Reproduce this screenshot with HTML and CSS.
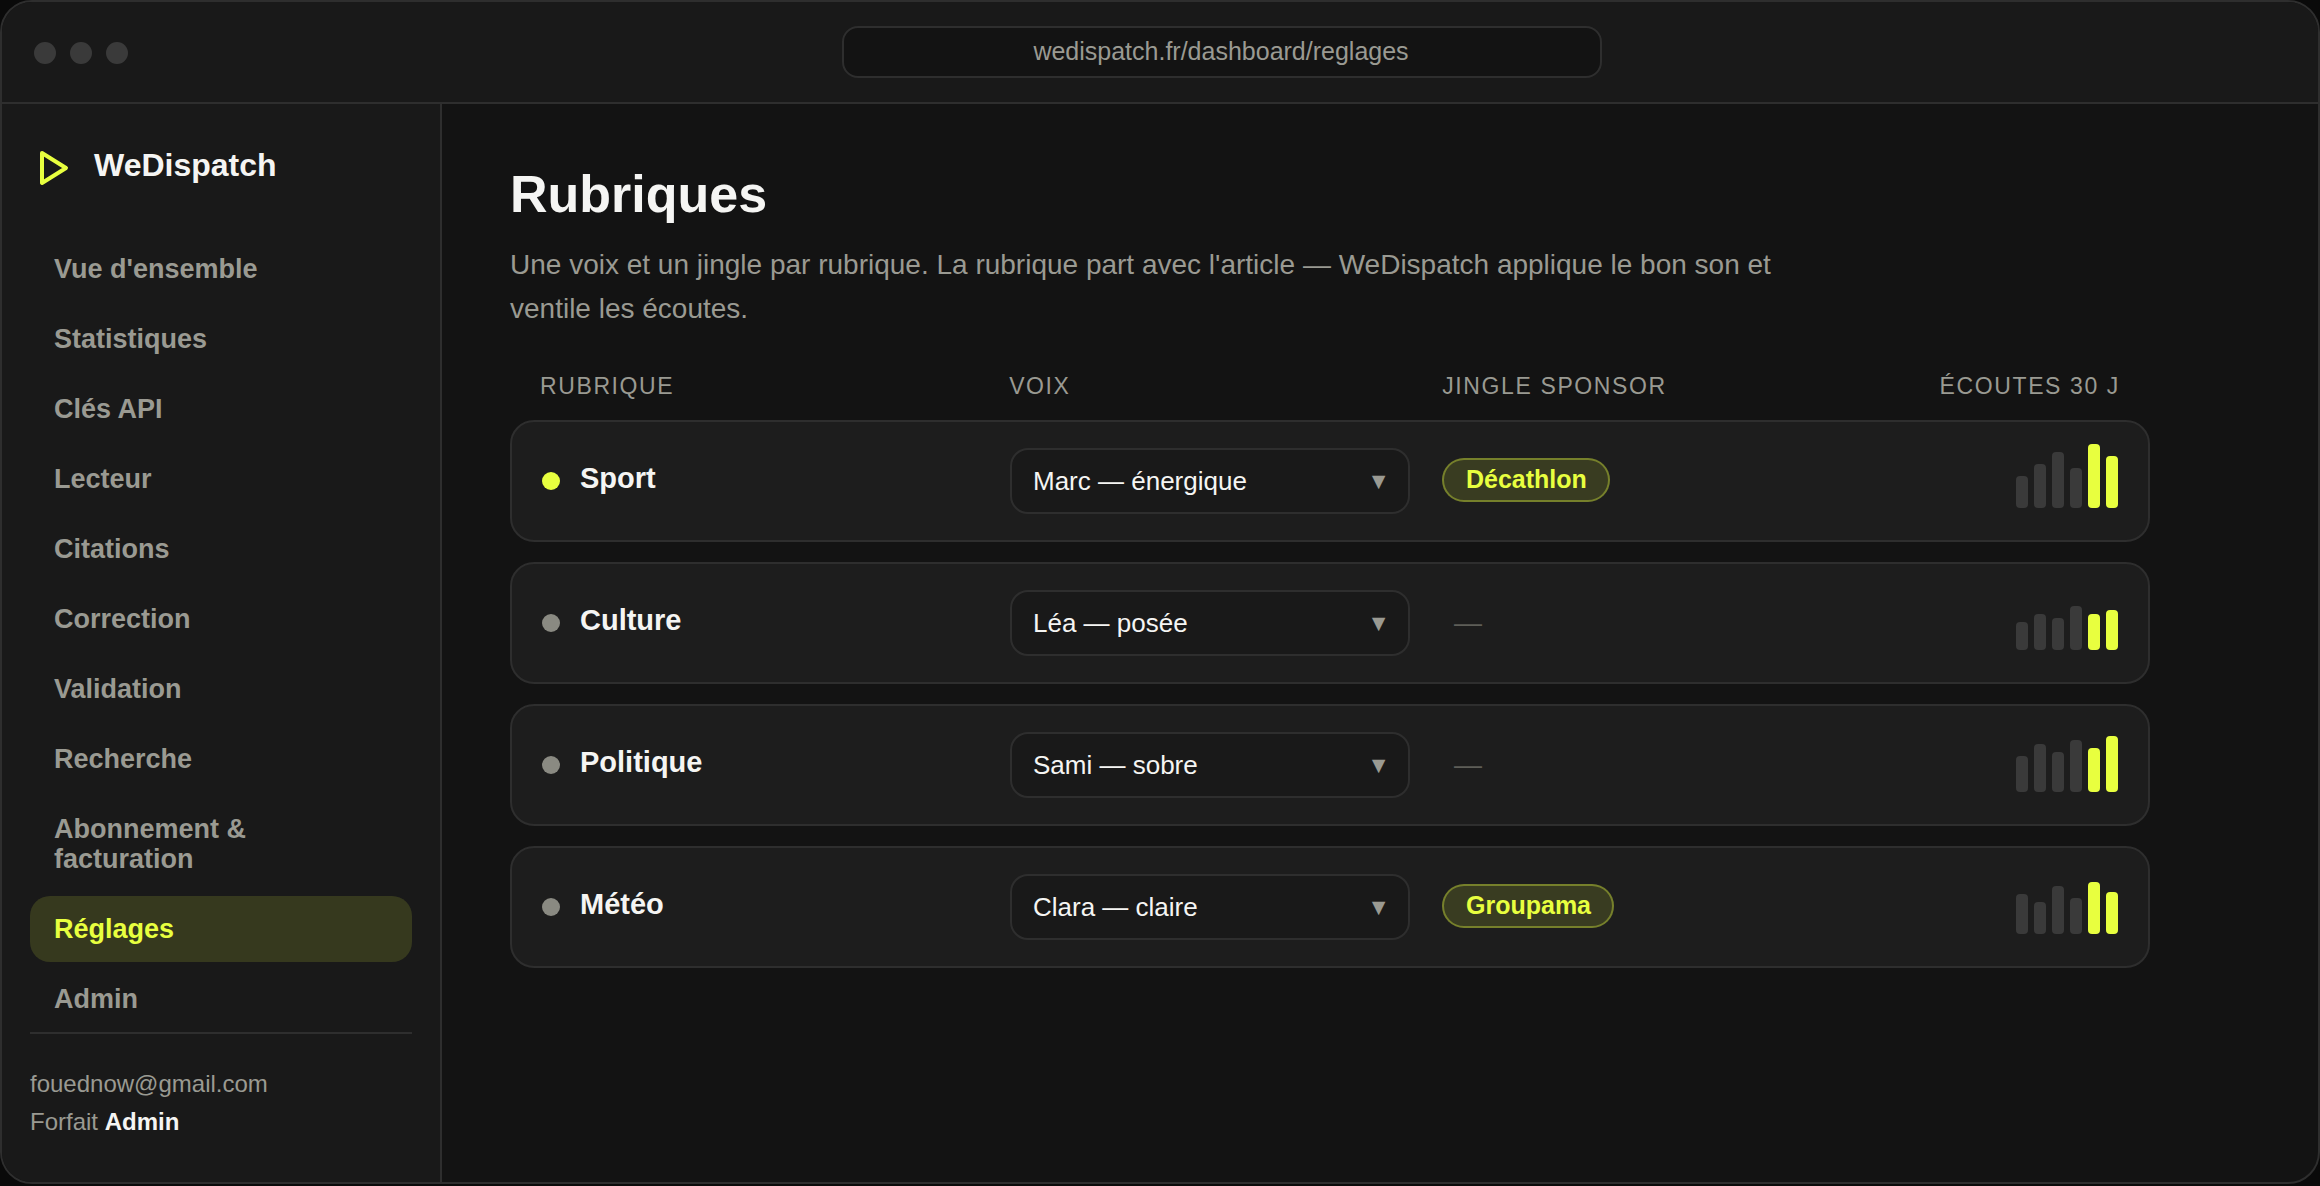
FILE: index.html
```
<!DOCTYPE html>
<html lang="fr">
<head>
    <meta charset="UTF-8">
    <meta name="viewport" content="width=device-width, initial-scale=1.0">
    <title>WeDispatch - Réglages</title>
    <link rel="stylesheet" href="styles.css">
</head>
<body>
    <div class="window">
        <div class="titlebar">
            <div class="dots"><i></i><i></i><i></i></div>
            <div class="url-zone">
                <div class="url">wedispatch.fr/dashboard/reglages</div>
            </div>
        </div>

        <div class="layout">
            <aside class="sidebar">
                <div class="brand">
                    <svg class="brand-icon" viewBox="0 0 48 48" fill="none">
                        <path d="M12 9 L36 24 L12 39 Z" stroke="#e8ff3f" stroke-width="4" stroke-linejoin="round"/>
                    </svg>
                    <span>WeDispatch</span>
                </div>

                <nav class="nav">
                    <a class="nav-item">Vue d'ensemble</a>
                    <a class="nav-item">Statistiques</a>
                    <a class="nav-item">Clés API</a>
                    <a class="nav-item">Lecteur</a>
                    <a class="nav-item">Citations</a>
                    <a class="nav-item">Correction</a>
                    <a class="nav-item">Validation</a>
                    <a class="nav-item">Recherche</a>
                    <a class="nav-item">Abonnement &amp; facturation</a>
                    <a class="nav-item active">Réglages</a>
                    <a class="nav-item">Admin</a>
                </nav>

                <div class="account">
                    <div>fouednow@gmail.com</div>
                    <div>Forfait <b>Admin</b></div>
                </div>
            </aside>

            <main class="main">
                <h1>Rubriques</h1>
                <p class="intro">Une voix et un jingle par rubrique. La rubrique part avec l'article — WeDispatch applique le bon son et ventile les écoutes.</p>

                <div class="table-head">
                    <span>Rubrique</span>
                    <span>Voix</span>
                    <span>Jingle sponsor</span>
                    <span class="right">Écoutes 30 j</span>
                </div>

                <div class="rows">
                    <div class="row">
                        <div class="name"><i class="dot on"></i><span>Sport</span></div>
                        <div class="select"><span>Marc — énergique</span><span class="caret">▼</span></div>
                        <div class="sponsor"><span class="pill">Décathlon</span></div>
                        <div class="spark">
                            <i style="height: 32px"></i><i style="height: 44px"></i><i style="height: 56px"></i><i style="height: 40px"></i><i class="hot" style="height: 64px"></i><i class="hot" style="height: 52px"></i>
                        </div>
                    </div>

                    <div class="row">
                        <div class="name"><i class="dot"></i><span>Culture</span></div>
                        <div class="select"><span>Léa — posée</span><span class="caret">▼</span></div>
                        <div class="sponsor"><span class="none">—</span></div>
                        <div class="spark">
                            <i style="height: 28px"></i><i style="height: 36px"></i><i style="height: 32px"></i><i style="height: 44px"></i><i class="hot" style="height: 36px"></i><i class="hot" style="height: 40px"></i>
                        </div>
                    </div>

                    <div class="row">
                        <div class="name"><i class="dot"></i><span>Politique</span></div>
                        <div class="select"><span>Sami — sobre</span><span class="caret">▼</span></div>
                        <div class="sponsor"><span class="none">—</span></div>
                        <div class="spark">
                            <i style="height: 36px"></i><i style="height: 48px"></i><i style="height: 40px"></i><i style="height: 52px"></i><i class="hot" style="height: 44px"></i><i class="hot" style="height: 56px"></i>
                        </div>
                    </div>

                    <div class="row">
                        <div class="name"><i class="dot"></i><span>Météo</span></div>
                        <div class="select"><span>Clara — claire</span><span class="caret">▼</span></div>
                        <div class="sponsor"><span class="pill">Groupama</span></div>
                        <div class="spark">
                            <i style="height: 40px"></i><i style="height: 32px"></i><i style="height: 48px"></i><i style="height: 36px"></i><i class="hot" style="height: 52px"></i><i class="hot" style="height: 42px"></i>
                        </div>
                    </div>
                </div>
            </main>
        </div>
    </div>
</body>
</html>
```
FILE: styles.css
```
:root {
    --bg: #131313;
    --panel: #191919;
    --card: #1d1d1d;
    --line: #2e2e2e;
    --bar: #3a3a3a;
    --text: #f5f5f3;
    --muted: #9a9a92;
    --accent: #e8ff3f;
}

* {
    margin: 0;
    padding: 0;
    box-sizing: border-box;
}

body {
    font-family: "Liberation Sans", Arial, sans-serif;
    background: #0a0a0a;
    color: var(--text);
    height: 1186px;
    overflow: hidden;
}

.window {
    display: flex;
    flex-direction: column;
    height: 1184px;
    background: var(--bg);
    border: 2px solid var(--line);
    border-radius: 32px;
    overflow: hidden;
}

.titlebar {
    display: flex;
    align-items: center;
    gap: 28px;
    height: 102px;
    padding: 0 30px 0 32px;
    background: var(--panel);
    border-bottom: 2px solid var(--line);
}

.dots {
    display: flex;
    gap: 14px;
    padding-top: 2px;
}

.dots i {
    width: 22px;
    height: 22px;
    border-radius: 50%;
    background: var(--bar);
}

.url-zone {
    flex: 1;
    display: flex;
    justify-content: center;
}

.url {
    width: 760px;
    height: 52px;
    padding-right: 2px;
    line-height: 47px;
    text-align: center;
    font-size: 25px;
    color: var(--muted);
    background: var(--bg);
    border: 2px solid var(--line);
    border-radius: 16px;
}

.layout {
    flex: 1;
    display: flex;
    min-height: 0;
}

.sidebar {
    display: flex;
    flex-direction: column;
    width: 440px;
    padding: 36px 28px 32px;
    background: var(--panel);
    border-right: 2px solid var(--line);
}

.brand {
    display: flex;
    align-items: center;
    gap: 16px;
    height: 52px;
    font-size: 32px;
    font-weight: bold;
    line-height: 36px;
}

.brand-icon {
    width: 48px;
    height: 48px;
    margin-top: 4px;
}

.brand span {
    margin-bottom: 2px;
}

.nav {
    display: flex;
    flex-direction: column;
    gap: 4px;
    margin-top: 44px;
}

.nav-item {
    padding: 18px 24px;
    font-size: 27px;
    font-weight: bold;
    line-height: 30px;
    color: var(--muted);
    border-radius: 20px;
}

.nav-item.active {
    color: var(--accent);
    background: rgba(232, 255, 63, 0.14);
}

.account {
    padding-top: 31px;
    font-size: 24px;
    line-height: 38px;
    color: var(--muted);
    border-top: 2px solid var(--line);
}

.account b {
    color: var(--text);
}

.main {
    flex: 1;
    padding: 60px 168px 0 68px;
}

h1 {
    font-size: 52px;
    line-height: 60px;
}

.intro {
    max-width: 1280px;
    margin-top: 19px;
    font-size: 28px;
    line-height: 44px;
    color: var(--muted);
}

.table-head,
.row {
    display: grid;
    grid-template-columns: 1.09fr 1fr 1fr 0.61fr;
    column-gap: 32px;
    align-items: center;
    padding: 0 30px;
}

.table-head {
    margin-top: 41px;
    font-size: 23px;
    line-height: 28px;
    letter-spacing: 1.61px;
    text-transform: uppercase;
    color: var(--muted);
}

.right {
    text-align: right;
    white-space: nowrap;
}

.rows {
    display: flex;
    flex-direction: column;
    gap: 20px;
    margin-top: 20px;
}

.row {
    height: 122px;
    background: var(--card);
    border: 2px solid var(--line);
    border-radius: 24px;
}

.name {
    display: flex;
    align-items: center;
    gap: 20px;
    font-size: 29px;
    font-weight: bold;
}

.name span {
    margin-bottom: 6px;
}

.dot {
    width: 18px;
    height: 18px;
    border-radius: 50%;
    background: #8a8a82;
}

.dot.on {
    background: var(--accent);
}

.select {
    display: flex;
    align-items: center;
    justify-content: space-between;
    height: 66px;
    padding: 0 18px 0 21px;
    font-size: 26px;
    background: var(--panel);
    border: 2px solid var(--line);
    border-radius: 18px;
}

.caret {
    font-size: 23px;
    color: var(--muted);
}

.sponsor {
    display: flex;
    align-items: center;
}

.pill {
    height: 44px;
    margin-bottom: 2px;
    padding: 0 21px 0 22px;
    font-size: 25px;
    font-weight: bold;
    line-height: 38px;
    color: var(--accent);
    background: rgba(232, 255, 63, 0.14);
    border: 2px solid rgba(232, 255, 63, 0.35);
    border-radius: 22px;
}

.none {
    margin-left: 12px;
    font-size: 28px;
    color: #5e5e58;
}

.spark {
    display: flex;
    align-items: flex-end;
    justify-content: flex-end;
    gap: 6px;
    height: 54px;
}

.spark i {
    width: 12px;
    background: var(--bar);
    border-radius: 4px;
}

.spark .hot {
    background: var(--accent);
}
```
